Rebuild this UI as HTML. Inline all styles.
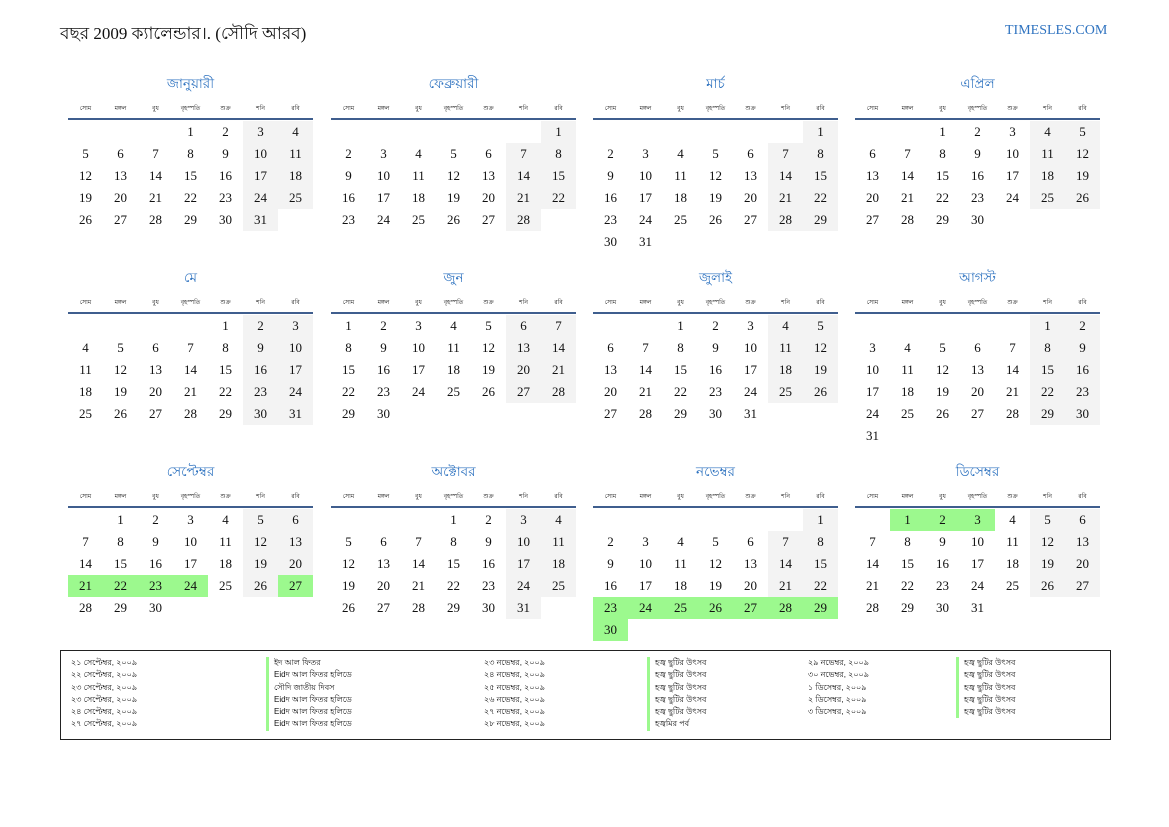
<!DOCTYPE html>
<html><head><meta charset="utf-8"><style>
*{margin:0;padding:0;box-sizing:border-box}
body{width:1169px;height:827px;background:#fff;position:relative;overflow:hidden;font-family:"Liberation Serif","Noto Serif CJK SC",serif;color:#111}
#t{position:absolute;left:60px;top:21px;font-size:17px;white-space:nowrap}
#s{position:absolute;left:1005px;top:23px;font-size:14px;color:#2f73c0}
.m{position:absolute;width:245px}
.tt{height:22px;text-align:center;font-size:13.5px;color:#2f73c0;font-family:"Liberation Sans","Noto Sans CJK SC",sans-serif;line-height:22px}
.h{display:flex;height:18px;margin-top:5px;font-family:"Liberation Sans","Noto Sans CJK SC",sans-serif;font-size:6px;line-height:18px}
.h i{font-style:normal;width:35px;text-align:center}
.ln{height:2px;background:#3f5e8e;margin-bottom:1px}
.r{display:flex;height:22px}
.r i{font-style:normal;width:35px;height:22px;line-height:22px;text-align:center;font-size:13px}
.r i:nth-child(n+6){background:#f3f3f3}
.r i.e{background:none}
.r i.g{background:#9cf98e}
#lg{position:absolute;left:60px;top:650px;width:1051px;height:90px;border:1.5px solid #222}
.c{position:absolute;top:6px;font-family:"Liberation Sans","Noto Sans CJK SC",sans-serif;font-size:8px;line-height:12.3px;white-space:nowrap}
.c div{height:12.3px}
.b div{border-left:3px solid #9cf98e;padding-left:5px}
</style></head><body>
<div id="t">বছর 2009 ক্যালেন্ডার।. (সৌদি আরব)</div>
<div id="s">TIMESLES.COM</div>

<div class="m" style="left:68px;top:73px"><div class="tt">জানুয়ারী</div><div class="h"><i>সোম</i><i>মঙ্গল</i><i>বুধ</i><i>বৃহস্পতি</i><i>শুক্র</i><i>শনি</i><i>রবি</i></div><div class="ln"></div>
<div class="r"><i class="e"></i><i class="e"></i><i class="e"></i><i>1</i><i>2</i><i>3</i><i>4</i></div>
<div class="r"><i>5</i><i>6</i><i>7</i><i>8</i><i>9</i><i>10</i><i>11</i></div>
<div class="r"><i>12</i><i>13</i><i>14</i><i>15</i><i>16</i><i>17</i><i>18</i></div>
<div class="r"><i>19</i><i>20</i><i>21</i><i>22</i><i>23</i><i>24</i><i>25</i></div>
<div class="r"><i>26</i><i>27</i><i>28</i><i>29</i><i>30</i><i>31</i></div></div>

<div class="m" style="left:331px;top:73px"><div class="tt">ফেব্রুয়ারী</div><div class="h"><i>সোম</i><i>মঙ্গল</i><i>বুধ</i><i>বৃহস্পতি</i><i>শুক্র</i><i>শনি</i><i>রবি</i></div><div class="ln"></div>
<div class="r"><i class="e"></i><i class="e"></i><i class="e"></i><i class="e"></i><i class="e"></i><i class="e"></i><i>1</i></div>
<div class="r"><i>2</i><i>3</i><i>4</i><i>5</i><i>6</i><i>7</i><i>8</i></div>
<div class="r"><i>9</i><i>10</i><i>11</i><i>12</i><i>13</i><i>14</i><i>15</i></div>
<div class="r"><i>16</i><i>17</i><i>18</i><i>19</i><i>20</i><i>21</i><i>22</i></div>
<div class="r"><i>23</i><i>24</i><i>25</i><i>26</i><i>27</i><i>28</i></div></div>

<div class="m" style="left:593px;top:73px"><div class="tt">মার্চ</div><div class="h"><i>সোম</i><i>মঙ্গল</i><i>বুধ</i><i>বৃহস্পতি</i><i>শুক্র</i><i>শনি</i><i>রবি</i></div><div class="ln"></div>
<div class="r"><i class="e"></i><i class="e"></i><i class="e"></i><i class="e"></i><i class="e"></i><i class="e"></i><i>1</i></div>
<div class="r"><i>2</i><i>3</i><i>4</i><i>5</i><i>6</i><i>7</i><i>8</i></div>
<div class="r"><i>9</i><i>10</i><i>11</i><i>12</i><i>13</i><i>14</i><i>15</i></div>
<div class="r"><i>16</i><i>17</i><i>18</i><i>19</i><i>20</i><i>21</i><i>22</i></div>
<div class="r"><i>23</i><i>24</i><i>25</i><i>26</i><i>27</i><i>28</i><i>29</i></div>
<div class="r"><i>30</i><i>31</i></div></div>

<div class="m" style="left:855px;top:73px"><div class="tt">এপ্রিল</div><div class="h"><i>সোম</i><i>মঙ্গল</i><i>বুধ</i><i>বৃহস্পতি</i><i>শুক্র</i><i>শনি</i><i>রবি</i></div><div class="ln"></div>
<div class="r"><i class="e"></i><i class="e"></i><i>1</i><i>2</i><i>3</i><i>4</i><i>5</i></div>
<div class="r"><i>6</i><i>7</i><i>8</i><i>9</i><i>10</i><i>11</i><i>12</i></div>
<div class="r"><i>13</i><i>14</i><i>15</i><i>16</i><i>17</i><i>18</i><i>19</i></div>
<div class="r"><i>20</i><i>21</i><i>22</i><i>23</i><i>24</i><i>25</i><i>26</i></div>
<div class="r"><i>27</i><i>28</i><i>29</i><i>30</i></div></div>

<div class="m" style="left:68px;top:267px"><div class="tt">মে</div><div class="h"><i>সোম</i><i>মঙ্গল</i><i>বুধ</i><i>বৃহস্পতি</i><i>শুক্র</i><i>শনি</i><i>রবি</i></div><div class="ln"></div>
<div class="r"><i class="e"></i><i class="e"></i><i class="e"></i><i class="e"></i><i>1</i><i>2</i><i>3</i></div>
<div class="r"><i>4</i><i>5</i><i>6</i><i>7</i><i>8</i><i>9</i><i>10</i></div>
<div class="r"><i>11</i><i>12</i><i>13</i><i>14</i><i>15</i><i>16</i><i>17</i></div>
<div class="r"><i>18</i><i>19</i><i>20</i><i>21</i><i>22</i><i>23</i><i>24</i></div>
<div class="r"><i>25</i><i>26</i><i>27</i><i>28</i><i>29</i><i>30</i><i>31</i></div></div>

<div class="m" style="left:331px;top:267px"><div class="tt">জুন</div><div class="h"><i>সোম</i><i>মঙ্গল</i><i>বুধ</i><i>বৃহস্পতি</i><i>শুক্র</i><i>শনি</i><i>রবি</i></div><div class="ln"></div>
<div class="r"><i>1</i><i>2</i><i>3</i><i>4</i><i>5</i><i>6</i><i>7</i></div>
<div class="r"><i>8</i><i>9</i><i>10</i><i>11</i><i>12</i><i>13</i><i>14</i></div>
<div class="r"><i>15</i><i>16</i><i>17</i><i>18</i><i>19</i><i>20</i><i>21</i></div>
<div class="r"><i>22</i><i>23</i><i>24</i><i>25</i><i>26</i><i>27</i><i>28</i></div>
<div class="r"><i>29</i><i>30</i></div></div>

<div class="m" style="left:593px;top:267px"><div class="tt">জুলাই</div><div class="h"><i>সোম</i><i>মঙ্গল</i><i>বুধ</i><i>বৃহস্পতি</i><i>শুক্র</i><i>শনি</i><i>রবি</i></div><div class="ln"></div>
<div class="r"><i class="e"></i><i class="e"></i><i>1</i><i>2</i><i>3</i><i>4</i><i>5</i></div>
<div class="r"><i>6</i><i>7</i><i>8</i><i>9</i><i>10</i><i>11</i><i>12</i></div>
<div class="r"><i>13</i><i>14</i><i>15</i><i>16</i><i>17</i><i>18</i><i>19</i></div>
<div class="r"><i>20</i><i>21</i><i>22</i><i>23</i><i>24</i><i>25</i><i>26</i></div>
<div class="r"><i>27</i><i>28</i><i>29</i><i>30</i><i>31</i></div></div>

<div class="m" style="left:855px;top:267px"><div class="tt">আগস্ট</div><div class="h"><i>সোম</i><i>মঙ্গল</i><i>বুধ</i><i>বৃহস্পতি</i><i>শুক্র</i><i>শনি</i><i>রবি</i></div><div class="ln"></div>
<div class="r"><i class="e"></i><i class="e"></i><i class="e"></i><i class="e"></i><i class="e"></i><i>1</i><i>2</i></div>
<div class="r"><i>3</i><i>4</i><i>5</i><i>6</i><i>7</i><i>8</i><i>9</i></div>
<div class="r"><i>10</i><i>11</i><i>12</i><i>13</i><i>14</i><i>15</i><i>16</i></div>
<div class="r"><i>17</i><i>18</i><i>19</i><i>20</i><i>21</i><i>22</i><i>23</i></div>
<div class="r"><i>24</i><i>25</i><i>26</i><i>27</i><i>28</i><i>29</i><i>30</i></div>
<div class="r"><i>31</i></div></div>

<div class="m" style="left:68px;top:461px"><div class="tt">সেপ্টেম্বর</div><div class="h"><i>সোম</i><i>মঙ্গল</i><i>বুধ</i><i>বৃহস্পতি</i><i>শুক্র</i><i>শনি</i><i>রবি</i></div><div class="ln"></div>
<div class="r"><i class="e"></i><i>1</i><i>2</i><i>3</i><i>4</i><i>5</i><i>6</i></div>
<div class="r"><i>7</i><i>8</i><i>9</i><i>10</i><i>11</i><i>12</i><i>13</i></div>
<div class="r"><i>14</i><i>15</i><i>16</i><i>17</i><i>18</i><i>19</i><i>20</i></div>
<div class="r"><i class="g">21</i><i class="g">22</i><i class="g">23</i><i class="g">24</i><i>25</i><i>26</i><i class="g">27</i></div>
<div class="r"><i>28</i><i>29</i><i>30</i></div></div>

<div class="m" style="left:331px;top:461px"><div class="tt">অক্টোবর</div><div class="h"><i>সোম</i><i>মঙ্গল</i><i>বুধ</i><i>বৃহস্পতি</i><i>শুক্র</i><i>শনি</i><i>রবি</i></div><div class="ln"></div>
<div class="r"><i class="e"></i><i class="e"></i><i class="e"></i><i>1</i><i>2</i><i>3</i><i>4</i></div>
<div class="r"><i>5</i><i>6</i><i>7</i><i>8</i><i>9</i><i>10</i><i>11</i></div>
<div class="r"><i>12</i><i>13</i><i>14</i><i>15</i><i>16</i><i>17</i><i>18</i></div>
<div class="r"><i>19</i><i>20</i><i>21</i><i>22</i><i>23</i><i>24</i><i>25</i></div>
<div class="r"><i>26</i><i>27</i><i>28</i><i>29</i><i>30</i><i>31</i></div></div>

<div class="m" style="left:593px;top:461px"><div class="tt">নভেম্বর</div><div class="h"><i>সোম</i><i>মঙ্গল</i><i>বুধ</i><i>বৃহস্পতি</i><i>শুক্র</i><i>শনি</i><i>রবি</i></div><div class="ln"></div>
<div class="r"><i class="e"></i><i class="e"></i><i class="e"></i><i class="e"></i><i class="e"></i><i class="e"></i><i>1</i></div>
<div class="r"><i>2</i><i>3</i><i>4</i><i>5</i><i>6</i><i>7</i><i>8</i></div>
<div class="r"><i>9</i><i>10</i><i>11</i><i>12</i><i>13</i><i>14</i><i>15</i></div>
<div class="r"><i>16</i><i>17</i><i>18</i><i>19</i><i>20</i><i>21</i><i>22</i></div>
<div class="r"><i class="g">23</i><i class="g">24</i><i class="g">25</i><i class="g">26</i><i class="g">27</i><i class="g">28</i><i class="g">29</i></div>
<div class="r"><i class="g">30</i></div></div>

<div class="m" style="left:855px;top:461px"><div class="tt">ডিসেম্বর</div><div class="h"><i>সোম</i><i>মঙ্গল</i><i>বুধ</i><i>বৃহস্পতি</i><i>শুক্র</i><i>শনি</i><i>রবি</i></div><div class="ln"></div>
<div class="r"><i class="e"></i><i class="g">1</i><i class="g">2</i><i class="g">3</i><i>4</i><i>5</i><i>6</i></div>
<div class="r"><i>7</i><i>8</i><i>9</i><i>10</i><i>11</i><i>12</i><i>13</i></div>
<div class="r"><i>14</i><i>15</i><i>16</i><i>17</i><i>18</i><i>19</i><i>20</i></div>
<div class="r"><i>21</i><i>22</i><i>23</i><i>24</i><i>25</i><i>26</i><i>27</i></div>
<div class="r"><i>28</i><i>29</i><i>30</i><i>31</i></div></div>

<div id="lg">
<div class="c" style="left:10px"><div>২১ সেপ্টেম্বর, ২০০৯</div><div>২২ সেপ্টেম্বর, ২০০৯</div><div>২৩ সেপ্টেম্বর, ২০০৯</div><div>২৩ সেপ্টেম্বর, ২০০৯</div><div>২৪ সেপ্টেম্বর, ২০০৯</div><div>২৭ সেপ্টেম্বর, ২০০৯</div></div>
<div class="c b" style="left:205px"><div>ইদ আল ফিতর</div><div>Eidদ আল ফিতর হলিডে</div><div>সৌদি জাতীয় দিবস</div><div>Eidদ আল ফিতর হলিডে</div><div>Eidদ আল ফিতর হলিডে</div><div>Eidদ আল ফিতর হলিডে</div></div>
<div class="c" style="left:423px"><div>২৩ নভেম্বর, ২০০৯</div><div>২৪ নভেম্বর, ২০০৯</div><div>২৫ নভেম্বর, ২০০৯</div><div>২৬ নভেম্বর, ২০০৯</div><div>২৭ নভেম্বর, ২০০৯</div><div>২৮ নভেম্বর, ২০০৯</div></div>
<div class="c b" style="left:586px"><div>হজ্ব ছুটির উৎসব</div><div>হজ্ব ছুটির উৎসব</div><div>হজ্ব ছুটির উৎসব</div><div>হজ্ব ছুটির উৎসব</div><div>হজ্ব ছুটির উৎসব</div><div>হজ্বমির পর্ব</div></div>
<div class="c" style="left:747px"><div>২৯ নভেম্বর, ২০০৯</div><div>৩০ নভেম্বর, ২০০৯</div><div>১ ডিসেম্বর, ২০০৯</div><div>২ ডিসেম্বর, ২০০৯</div><div>৩ ডিসেম্বর, ২০০৯</div></div>
<div class="c b" style="left:895px"><div>হজ্ব ছুটির উৎসব</div><div>হজ্ব ছুটির উৎসব</div><div>হজ্ব ছুটির উৎসব</div><div>হজ্ব ছুটির উৎসব</div><div>হজ্ব ছুটির উৎসব</div></div>
</div>
</body></html>
